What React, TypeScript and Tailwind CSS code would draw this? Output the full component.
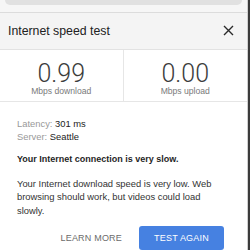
export default function App() {
  return (
    <div className="w-[250px] h-[250px] flex bg-white overflow-hidden font-['Liberation_Sans',Arial,sans-serif]">
      <div className="flex-1 flex flex-col">
        <div className="h-[13px] bg-[#f6f6f6] px-[5px] border-b border-[#dcdcdc]">
          <div className="h-[5px] bg-[#e1e1e1] rounded-b-[6px]" />
        </div>

        <header className="h-[37px] bg-[#f4f4f4] border-b border-[#e2e2e2] flex items-center justify-between pl-[8px] pr-[13px]">
          <h1 className="text-[12.3px] text-[#212121]">Internet speed test</h1>
          <svg width="11" height="11" viewBox="0 0 11 11" className="text-[#2a2a2a]">
            <path d="M1 1L10 10M10 1L1 10" stroke="currentColor" strokeWidth="1.4" />
          </svg>
        </header>

        <section className="h-[52px] grid grid-cols-2 border-b border-[#e6e6e6]">
          <div className="flex flex-col items-center pt-[12px] border-r border-[#e6e6e6]">
            <p className="text-[25px] leading-[24px] font-light text-[#3c3c3c] font-['Roboto',sans-serif]">0.99</p>
            <p className="text-[8.6px] leading-[10px] text-[#7a7a7a]">Mbps download</p>
          </div>
          <div className="flex flex-col items-center pt-[12px]">
            <p className="text-[25px] leading-[24px] font-light text-[#3c3c3c] font-['Roboto',sans-serif]">0.00</p>
            <p className="text-[8.6px] leading-[10px] text-[#7a7a7a]">Mbps upload</p>
          </div>
        </section>

        <div className="flex-1 flex flex-col px-[17px] pt-[15px] text-[9.4px] leading-[13px] text-[#222]">
          <p><span className="text-[#999]">Latency:</span> 301 ms</p>
          <p><span className="text-[#999]">Server:</span> Seattle</p>

          <p className="mt-[10px] text-[9px] font-bold text-[#1f1f1f]">Your Internet connection is very slow.</p>

          <p className="mt-[11px] leading-[13.5px] text-[#333]">
            Your Internet download speed is very low. Web browsing should work, but videos could load slowly.
          </p>

          <div className="mt-[9px] flex justify-end items-center gap-[17px] pr-[6px]">
            <button className="text-[9px] text-[#6b6b6b] tracking-[0.2px]">LEARN MORE</button>
            <button className="w-[85px] h-[24px] rounded-[3px] bg-[#4681e1] text-white text-[9px] tracking-[0.2px]">TEST AGAIN</button>
          </div>
        </div>
      </div>
      <div className="w-[3px] bg-[#3b3b3b] border-l border-[#d0d0d0]" />
    </div>
  )
}
